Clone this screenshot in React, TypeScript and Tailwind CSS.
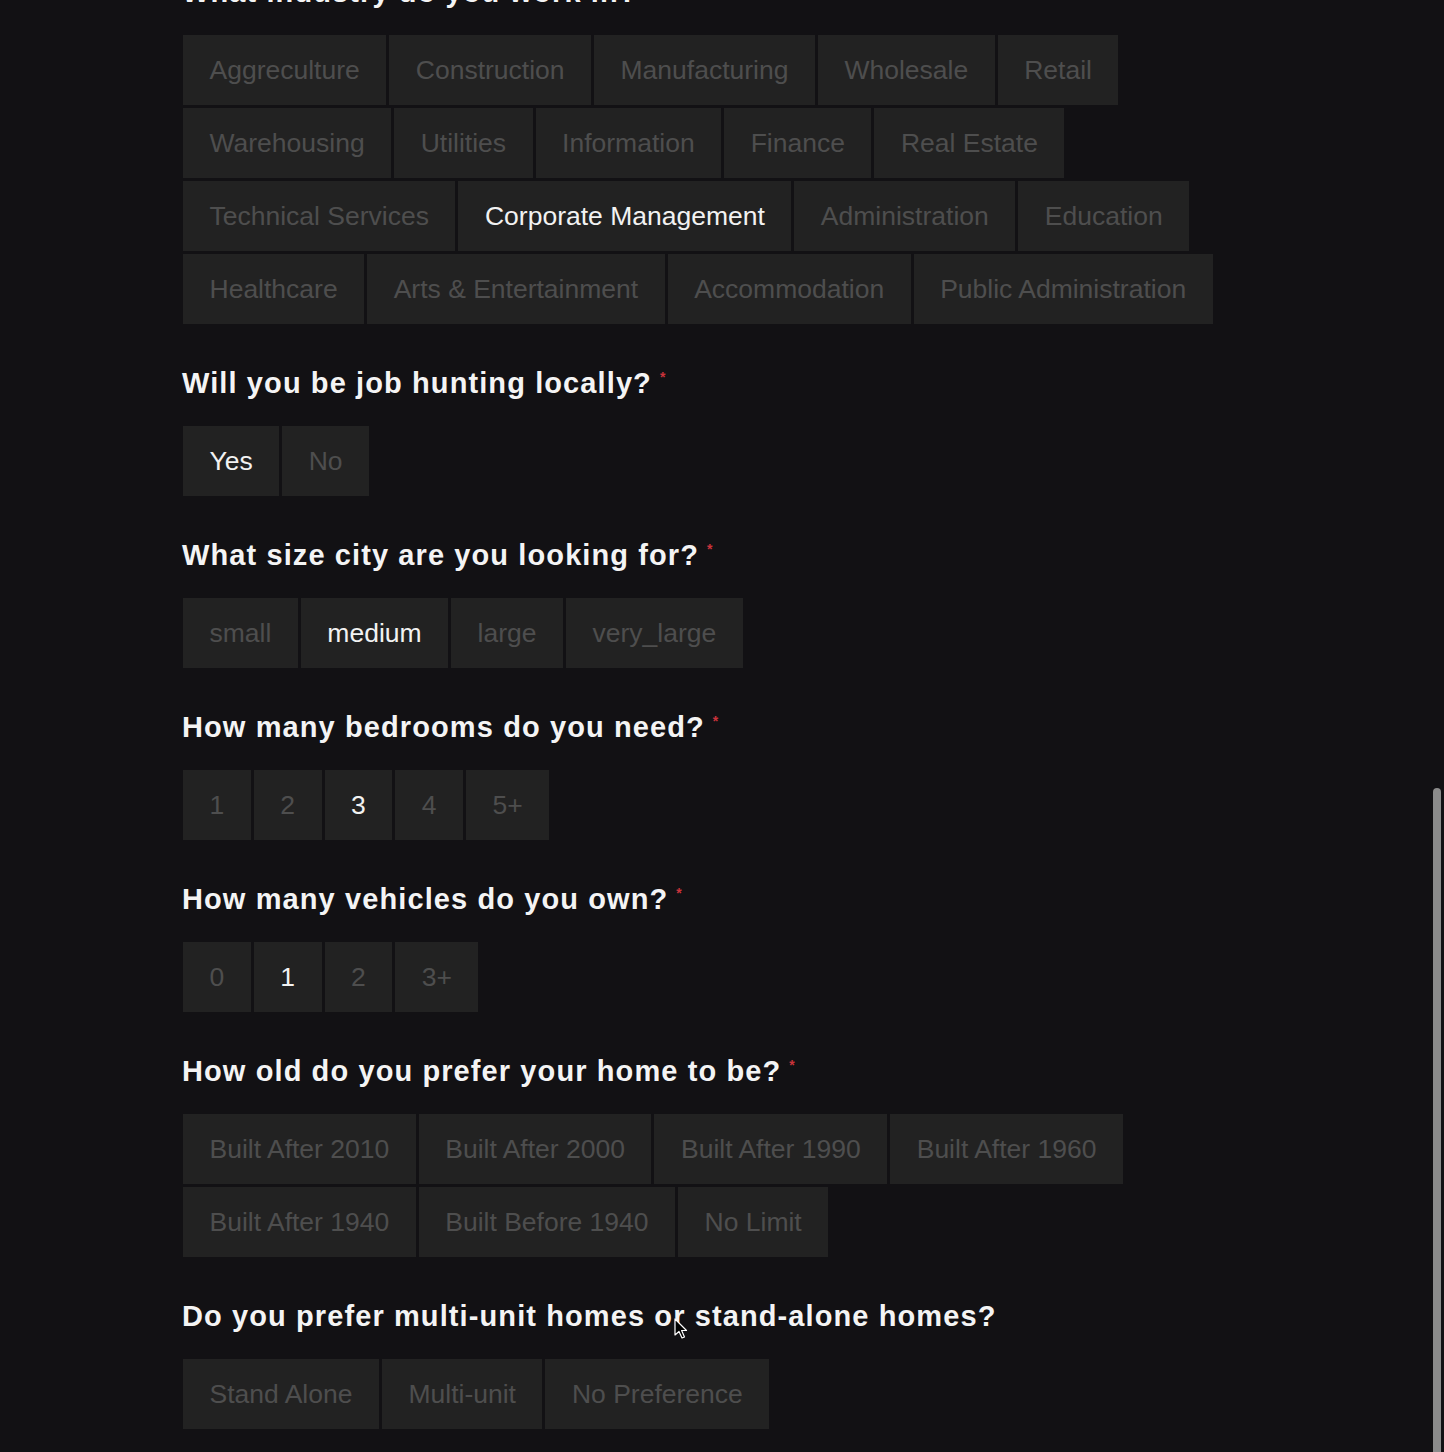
import React from 'react'

type Question = {
  title: string
  required?: boolean
  options: string[]
  selected?: string
}

const questions: Question[] = [
  {
    title: 'What industry do you work in?',
    required: true,
    options: [
      'Aggreculture',
      'Construction',
      'Manufacturing',
      'Wholesale',
      'Retail',
      'Warehousing',
      'Utilities',
      'Information',
      'Finance',
      'Real Estate',
      'Technical Services',
      'Corporate Management',
      'Administration',
      'Education',
      'Healthcare',
      'Arts & Entertainment',
      'Accommodation',
      'Public Administration',
    ],
    selected: 'Corporate Management',
  },
  {
    title: 'Will you be job hunting locally?',
    required: true,
    options: ['Yes', 'No'],
    selected: 'Yes',
  },
  {
    title: 'What size city are you looking for?',
    required: true,
    options: ['small', 'medium', 'large', 'very_large'],
    selected: 'medium',
  },
  {
    title: 'How many bedrooms do you need?',
    required: true,
    options: ['1', '2', '3', '4', '5+'],
    selected: '3',
  },
  {
    title: 'How many vehicles do you own?',
    required: true,
    options: ['0', '1', '2', '3+'],
    selected: '1',
  },
  {
    title: 'How old do you prefer your home to be?',
    required: true,
    options: [
      'Built After 2010',
      'Built After 2000',
      'Built After 1990',
      'Built After 1960',
      'Built After 1940',
      'Built Before 1940',
      'No Limit',
    ],
  },
  {
    title: 'Do you prefer multi-unit homes or stand-alone homes?',
    options: ['Stand Alone', 'Multi-unit', 'No Preference'],
  },
]

function OptionButton({ label, active }: { label: string; active: boolean }) {
  return (
    <button
      type="button"
      className={
        'h-[70px] px-[26.5px] bg-[#222222] text-[26.5px] leading-none flex items-center ' +
        (active ? 'text-[#f2f2f2]' : 'text-[#4e4e4e]')
      }
    >
      {label}
    </button>
  )
}

export default function App() {
  return (
    <div
      className="relative h-[1452px] overflow-hidden bg-[#121114]"
      style={{ fontFamily: '"Liberation Sans", Arial, sans-serif' }}
    >
      <div className="mx-auto w-[1080px] -mt-[25px] flex flex-col gap-[42px]">
        {questions.map((q) => (
          <section key={q.title}>
            <h2 className="text-[29px] leading-[34px] font-bold tracking-[1.1px] text-[#f4f4f4] mb-[26px] flex items-start">
              <span>{q.title}</span>
              {q.required && (
                <span className="ml-[8px] text-[14px] leading-none text-[#c9333b] mt-[4px]">*</span>
              )}
            </h2>
            <div className="flex flex-wrap gap-[3px] pl-px">
              {q.options.map((opt) => (
                <OptionButton key={opt} label={opt} active={opt === q.selected} />
              ))}
            </div>
          </section>
        ))}
      </div>

      {/* overlay scrollbar */}
      <div className="absolute right-[3px] top-[788px] w-[8px] h-[680px] rounded-full bg-[#8b8b8b]" />

      {/* mouse cursor */}
      <svg
        className="absolute left-[674px] top-[1318px]"
        width="14"
        height="22"
        viewBox="0 0 14 22"
      >
        <path
          d="M1 1 L1 17 L5 13.5 L8 20 L10.5 19 L7.6 12.5 L12.5 12.5 Z"
          fill="#000"
          stroke="#fff"
          strokeWidth="1.2"
          strokeLinejoin="round"
        />
      </svg>
    </div>
  )
}
